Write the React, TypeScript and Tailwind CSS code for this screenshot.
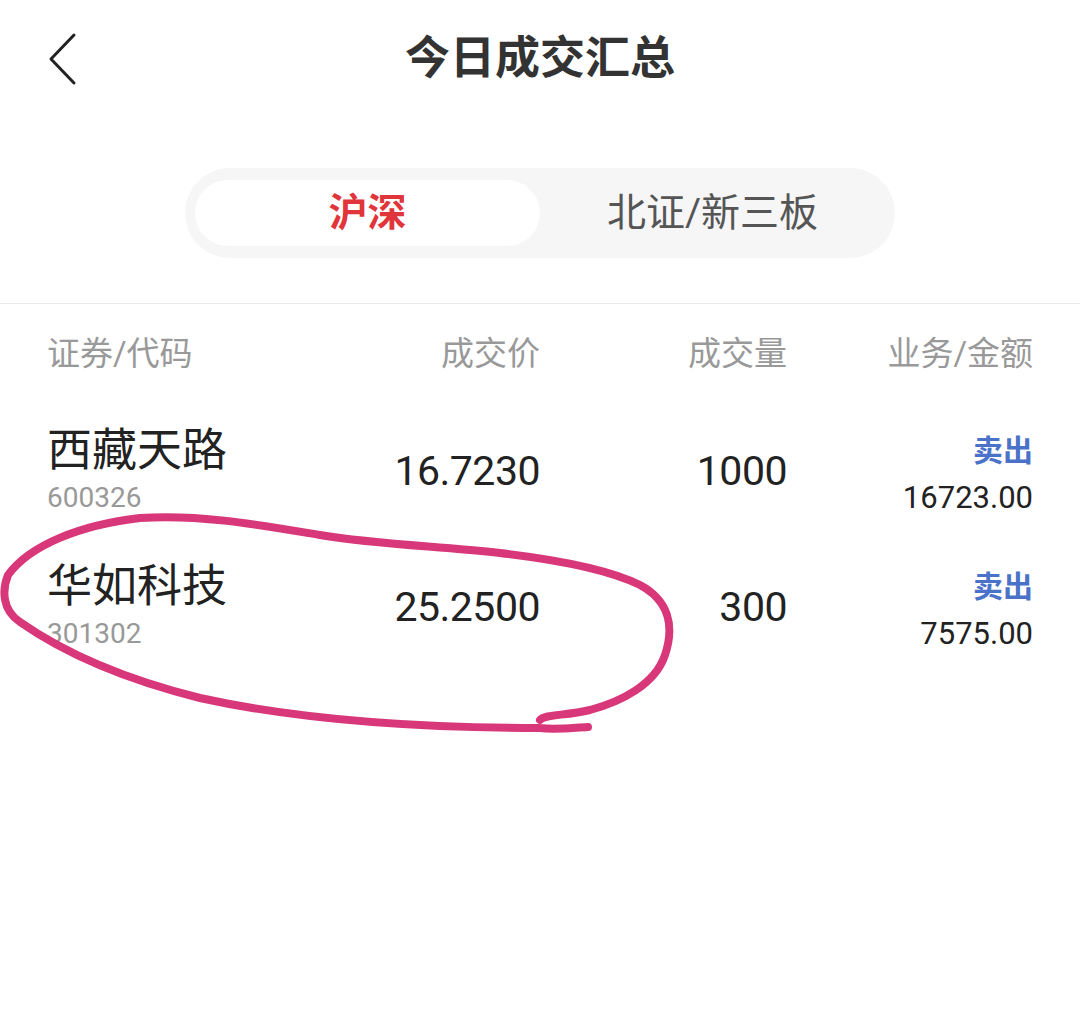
import { ChevronLeft } from 'lucide-react'

interface Trade {
  name: string
  code: string
  price: string
  volume: string
  side: string
  amount: string
}

const trades: Trade[] = [
  { name: '西藏天路', code: '600326', price: '16.7230', volume: '1000', side: '卖出', amount: '16723.00' },
  { name: '华如科技', code: '301302', price: '25.2500', volume: '300', side: '卖出', amount: '7575.00' },
]

export default function App() {
  return (
    <div className="relative w-[1080px] h-[1015px] bg-white overflow-hidden font-['Roboto','Noto_Sans_CJK_SC',sans-serif]">
      {/* 顶栏 */}
      <div className="flex items-center h-[118px] px-[40px]">
        <div className="w-[70px] flex items-center">
          <svg width="40" height="56" viewBox="0 0 40 56" fill="none">
            <path d="M34 4 L11 28 L34 52" stroke="#222" strokeWidth="3" strokeLinecap="round" strokeLinejoin="round" />
          </svg>
        </div>
        <h1 className="flex-1 text-center text-[45px] font-bold text-[#333]">今日成交汇总</h1>
        <div className="w-[70px]" />
      </div>

      {/* 市场切换 */}
      <div className="mt-[50px] mx-auto w-[710px] h-[90px] rounded-full bg-[#f6f6f6] px-[10px] py-[12px] flex">
        <div className="w-[345px] h-[66px] rounded-full bg-white flex items-center justify-center">
          <span className="text-[39px] font-bold text-[#e0353b]">沪深</span>
        </div>
        <div className="w-[345px] h-[66px] flex items-center justify-center">
          <span className="text-[39px] text-[#555]">北证/新三板</span>
        </div>
      </div>

      <div className="mt-[45px] border-t border-[#ebebeb]" />

      {/* 表头 */}
      <div className="flex items-center h-[100px] px-[47px] text-[33px] text-[#999]">
        <div className="w-[260px]">证券/代码</div>
        <div className="w-[233px] text-right">成交价</div>
        <div className="w-[247px] text-right">成交量</div>
        <div className="w-[246px] text-right">业务/金额</div>
      </div>

      {/* 成交列表 */}
      {trades.map(t => (
        <div key={t.code} className="flex items-center h-[136px] px-[47px]">
          <div className="w-[260px] flex flex-col">
            <span className="text-[45px] leading-[52px] text-[#222]">{t.name}</span>
            <span className="text-[28px] leading-[42px] text-[#999]">{t.code}</span>
          </div>
          <div className="w-[233px] text-right text-[41px] tracking-[-0.5px] text-[#222]">{t.price}</div>
          <div className="w-[247px] text-right text-[41px] tracking-[-0.5px] text-[#222]">{t.volume}</div>
          <div className="w-[246px] flex flex-col items-end">
            <span className="text-[30px] leading-[52px] font-bold text-[#4a72c9]">{t.side}</span>
            <span className="text-[31px] leading-[42px] text-[#222]">{t.amount}</span>
          </div>
        </div>
      ))}

      {/* 手绘圈注 */}
      <svg className="absolute left-0 top-0 pointer-events-none" width="1080" height="1015" viewBox="0 0 1080 1015" fill="none">
        <path
          d="M588 727 C570 728 555 730 540 728 C420 728 300 720 200 698 C120 678 60 650 20 622 C2 610 2 590 8 575 C30 545 80 525 140 518 C200 514 260 525 320 535 C380 545 440 546 500 553 C560 560 610 570 640 585 C668 600 675 625 665 655 C655 685 620 702 590 710 C565 716 545 714 540 720"
          stroke="#d8377a"
          strokeWidth="8"
          strokeLinecap="round"
          strokeLinejoin="round"
        />
      </svg>
    </div>
  )
}
